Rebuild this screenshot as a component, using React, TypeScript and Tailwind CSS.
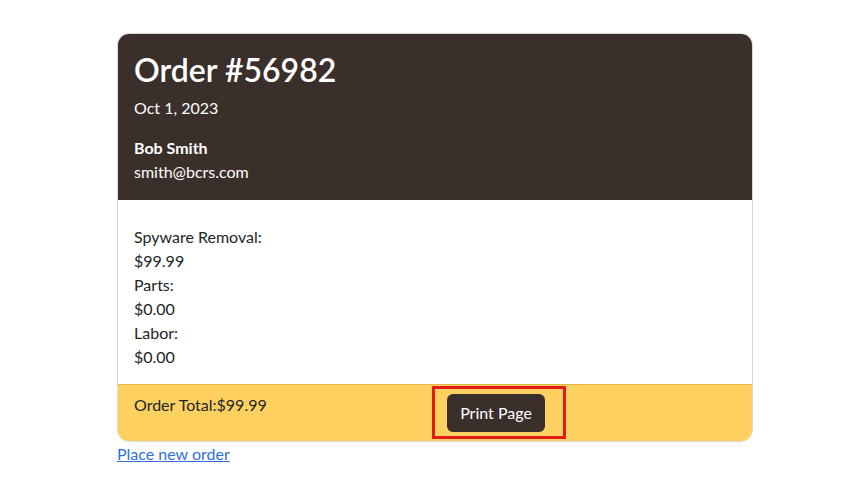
import React from 'react';

const order = {
    id: 56982,
    date: 'Oct 1, 2023',
    name: 'Bob Smith',
    email: 'smith@bcrs.com',
    items: [
        { label: 'Spyware Removal:', price: '$99.99' },
        { label: 'Parts:', price: '$0.00' },
        { label: 'Labor:', price: '$0.00' },
    ],
    total: '$99.99',
};

export default function App() {
    return (
        <div className="min-h-[504px] w-[856px] bg-white font-['Segoe_UI','Lato',sans-serif] text-[16px] leading-6 text-[#212529]">
            <div className="ml-[117px] w-[636px] pt-[33px]">
                {/* Order card */}
                <div className="overflow-hidden rounded-xl border border-[#d9d9d9]">
                    <div className="bg-[#3a2f2b] px-4 pb-4 pt-[15px] text-white">
                        <h1 className="text-[32px] font-semibold leading-[42px]">Order #{order.id}</h1>
                        <p className="mt-[5px]">{order.date}</p>
                        <p className="mt-4 font-bold">{order.name}</p>
                        <p>{order.email}</p>
                    </div>

                    <div className="bg-white px-4 pb-[15px] pt-[25px]">
                        {order.items.map((item) => (
                            <React.Fragment key={item.label}>
                                <p>{item.label}</p>
                                <p>{item.price}</p>
                            </React.Fragment>
                        ))}
                    </div>

                    <div className="flex h-[57px] items-start border-t border-[#e2b54c] bg-[#fed05f] pl-4">
                        <p className="mt-[8px] w-[298px]">Order Total:{order.total}</p>
                        {/* highlighted print button */}
                        <div className="mt-[1px] flex h-[53px] w-[134px] items-center border-[3px] border-[#e31b1b] pl-3">
                            <button className="h-[38px] w-[98px] rounded-md bg-[#3a2f2b] text-white">Print Page</button>
                        </div>
                    </div>
                </div>

                <a href="#" className="text-[#2f6fe0] underline">Place new order</a>
            </div>
        </div>
    );
}
